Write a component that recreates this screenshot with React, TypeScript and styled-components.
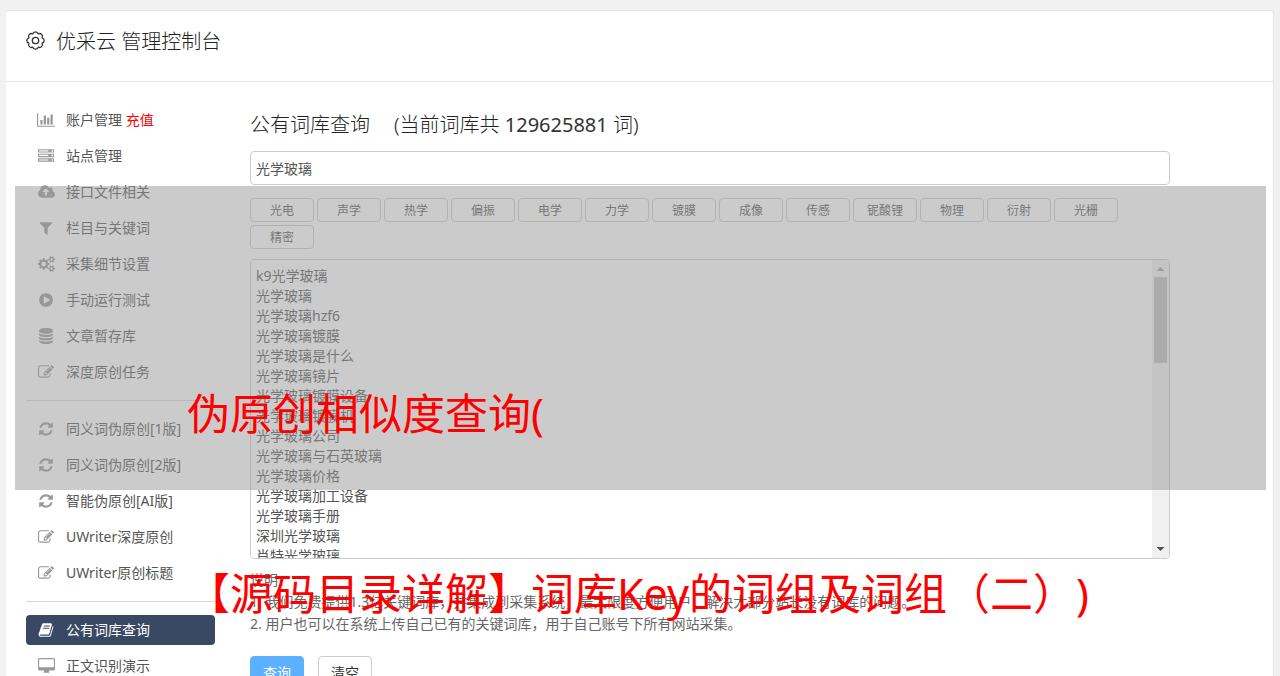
import React from "react";
import styled, { createGlobalStyle } from "styled-components";

const sans = `"Noto Sans", "Noto Sans CJK SC", sans-serif`;

const GlobalStyle = createGlobalStyle`
  *, *::before, *::after { box-sizing: border-box; }
  html, body { height: 100%; overflow: hidden; }
  body { margin: 0; background: #f1f1f1; color: #555; font-family: ${sans}; font-size: 14px; line-height: 20px; text-spacing-trim: space-all; }
  button, input, textarea { font: inherit; color: inherit; }
`;

const Page = styled.div`
  position: relative;
  padding: 10px 6px 0;
`;

const Card = styled.div`
  background: #fff;
  border: 1px solid #e5e5e5;
  border-width: 1px 1px 0 0;
  border-radius: 4px 4px 0 0;
`;

const Header = styled.header`
  display: flex;
  align-items: center;
  gap: 10px;
  height: 71px;
  padding: 0 20px 11px;
  border-bottom: 1px solid #e5e5e5;
`;

const Title = styled.h1`
  margin: 0;
  padding-top: 3px;
  color: #222;
  font-size: 20px;
  line-height: 28px;
  font-weight: 300;
`;

const Columns = styled.div`
  display: flex;
  align-items: flex-start;
  gap: 35px;
  padding: 23px 20px 0;
`;

const Sidebar = styled.nav`
  flex: none;
  width: 189px;
`;

const MenuLink = styled.a<{ $active?: boolean }>`
  display: flex;
  align-items: center;
  gap: 10px;
  height: 30px;
  margin-bottom: 6px;
  padding-left: 10px;
  border-radius: 4px;
  color: ${(p) => (p.$active ? "#fff" : "#555")};
  background: ${(p) => (p.$active ? "#394963" : "transparent")};
  text-decoration: none;
  white-space: nowrap;
`;

const IconBox = styled.span<{ $active?: boolean }>`
  display: flex;
  justify-content: center;
  width: 20px;
  color: ${(p) => (p.$active ? "#fff" : "#999")};
`;

const Recharge = styled.span`
  color: #f00;
`;

const Divider = styled.hr`
  height: 1px;
  margin: 13px 0;
  border: 0;
  background: #d8d8d8;
`;

const Main = styled.main`
  flex: 1;
  max-width: 920px;
  padding-top: 5px;
`;

const Heading = styled.h2`
  display: flex;
  gap: 24px;
  margin: 0 0 11px;
  color: #222;
  font-size: 20px;
  line-height: 30px;
  font-weight: 300;
`;

const Count = styled.span`
  color: #333;
  font-weight: 400;
`;

const SearchBox = styled.input`
  display: block;
  width: 100%;
  height: 34px;
  padding: 0 5px;
  border: 1px solid #ccc;
  border-radius: 4px;
  background: #fff;
`;

const Tags = styled.div`
  display: flex;
  flex-wrap: wrap;
  gap: 3px;
  margin: 13px 0 10px;
`;

const Tag = styled.button`
  width: 64px;
  height: 24px;
  padding: 2px 0 0;
  border: 1px solid #ccc;
  border-radius: 4px;
  background: #fff;
  font-size: 12px;
  line-height: 20px;
`;

const ResultFrame = styled.div`
  display: flex;
  height: 300px;
  border: 1px solid #ccc;
  border-radius: 4px;
  overflow: hidden;
`;

const Results = styled.textarea`
  flex: 1;
  padding: 6px 5px;
  border: 0;
  resize: none;
  overflow: hidden;
  background: #fff;
  line-height: 20px;
`;

const ScrollTrack = styled.div`
  display: flex;
  flex-direction: column;
  align-items: center;
  width: 17px;
  padding: 7px 0;
  background: #f0f0f0;
`;

const ScrollThumb = styled.div`
  width: 13px;
  height: 86px;
  margin: 6px 0 auto;
  background: #c1c1c1;
`;

const Arrow = styled.span<{ $down?: boolean }>`
  width: 8px;
  height: 4px;
  background: ${(p) => (p.$down ? "#505050" : "#a3a3a3")};
  clip-path: ${(p) => (p.$down ? "polygon(0 0, 100% 0, 50% 100%)" : "polygon(0 100%, 100% 100%, 50% 0)")};
`;

const Notes = styled.div`
  margin: 10px 0 21px;
  color: #666;
  line-height: 22px;
`;

const Note = styled.p`
  margin: 0;
`;

const Actions = styled.div`
  display: flex;
  gap: 14px;
`;

const Action = styled.button<{ $primary?: boolean }>`
  width: 54px;
  height: 34px;
  padding: 0;
  border: 1px solid ${(p) => (p.$primary ? "#5bb0ff" : "#ccc")};
  border-radius: 4px;
  color: ${(p) => (p.$primary ? "#fff" : "#333")};
  background: ${(p) => (p.$primary ? "#5bb0ff" : "#fff")};
`;

const Veil = styled.div`
  position: absolute;
  top: 186px;
  left: 15px;
  right: 14px;
  height: 304px;
  background: rgba(151, 151, 151, 0.5);
  pointer-events: none;
`;

const Caption = styled.div`
  position: absolute;
  top: 324px;
  left: 187px;
  color: #f00;
  font-size: 43px;
  line-height: 180px;
  white-space: nowrap;
  pointer-events: none;
`;

const CaptionLine = styled.p`
  margin: 0;
`;

const smallCog = (y: number) =>
  `M1856 ${y}v140q0 16-149 31-12 27-30 52 51 113 51 138 0 4-4 7-122 71-124 71-8 0-46-47t-52-68q-20 2-30 2t-30-2q-14 21-52 68t-46 47q-2 0-124-71-4-3-4-7 0-25 51-138-18-25-30-52-149-15-149-31v-140q0-16 149-31 13-29 30-52-51-113-51-138 0-4 4-7 4-2 35-20t59-34 30-16q8 0 46 46.5t52 67.5q20-2 30-2t30 2q51-71 92-112l6-2q4 0 124 70 4 3 4 7 0 25-51 138 17 23 30 52 149 15 149 31zM1600 ${y + 70}q0-52-38-90t-90-38-90 38-38 90q0 53 37.5 90.5t90.5 37.5 90.5-37.5 37.5-90.5z`;

type Glyph = { x?: number; w?: number; d: string };

const glyphs: Record<string, Glyph> = {
  chart: {
    w: 2048,
    d: "M640 896v512h-256v-512h256zm384-512v1024h-256v-1024h256zm1024 1152v128h-2048v-1536h128v1408h1920zm-640-896v768h-256v-768h256zm384-384v1152h-256v-1152h256z",
  },
  server: {
    d: "M128 1408h1024v-128h-1024v128zm0-512h1024v-128h-1024v128zm1568 448q0-40-28-68t-68-28-68 28-28 68 28 68 68 28 68-28 28-68zm-1568-960h1024v-128h-1024v128zm1568 448q0-40-28-68t-68-28-68 28-28 68 28 68 68 28 68-28 28-68zm0-512q0-40-28-68t-68-28-68 28-28 68 28 68 68 28 68-28 28-68zm96 832v384h-1792v-384h1792zm0-512v384h-1792v-384h1792zm0-512v384h-1792v-384h1792z",
  },
  upload: {
    x: -64,
    w: 1920,
    d: "M1216 864q0-14-9-23l-352-352q-9-9-23-9t-23 9l-351 351q-10 12-10 24 0 14 9 23t23 9h224v352q0 13 9.5 22.5t22.5 9.5h192q13 0 22.5-9.5t9.5-22.5v-352h224q13 0 22.5-9.5t9.5-22.5zm640 288q0 159-112.5 271.5t-271.5 112.5h-1088q-185 0-316.5-131.5t-131.5-316.5q0-130 70-240t188-165q-2-30-2-43 0-212 150-362t362-150q156 0 285.5 87t188.5 231q71-62 166-62 106 0 181 75t75 181q0 76-41 138 130 31 213.5 135.5t83.5 238.5z",
  },
  filter: {
    d: "M1595 295q17 41-14 70l-493 493v742q0 42-39 59-13 5-25 5-27 0-45-19l-256-256q-19-19-19-45v-486l-493-493q-31-29-14-70 17-39 59-39h1280q42 0 59 39z",
  },
  cogs: {
    x: -64,
    w: 1920,
    d:
      "M832 896q0-106-75-181t-181-75-181 75-75 181 75 181 181 75 181-75 75-181zm384-91v185q0 10-7 19.5t-16 10.5l-155 24q-11 35-32 76 34 48 90 115 7 11 7 20 0 12-7 19-23 30-82.5 89.5t-78.5 59.5q-11 0-21-7l-115-90q-37 19-77 31-11 108-23 155-7 24-30 24h-186q-11 0-20-7.5t-10-17.5l-23-153q-34-10-75-31l-118 89q-7 7-20 7-11 0-21-8-144-133-144-160 0-9 7-19 10-14 41-53t47-61q-23-44-35-82l-152-24q-10-1-17-9.5t-7-19.5v-185q0-10 7-19.5t16-10.5l155-24q11-35 32-76-34-48-90-115-7-11-7-20 0-12 7-20 22-30 82-89t79-59q11 0 21 7l115 90q34-18 77-32 11-108 23-154 7-24 30-24h186q11 0 20 7.5t10 17.5l23 153q34 10 75 31l118-89q8-7 20-7 11 0 21 8 144 133 144 160 0 8-7 19-12 16-42 54t-45 60q23 48 34 82l152 23q10 2 17 10.5t7 19.5z" +
      smallCog(1338) +
      smallCog(314),
  },
  play: {
    d: "M896 128q209 0 385.5 103t279.5 279.5 103 385.5-103 385.5-279.5 279.5-385.5 103-385.5-103-279.5-279.5-103-385.5 103-385.5 279.5-279.5 385.5-103zm384 823q32-18 32-55t-32-55l-544-320q-31-19-64-1-32 19-32 56v640q0 37 32 56 16 8 32 8 17 0 32-9z",
  },
  database: {
    d: "M896 768q237 0 443-43t325-127v170q0 69-103 128t-280 93.5-385 34.5-385-34.5-280-93.5-103-128v-170q119 84 325 127t443 43zm0 768q237 0 443-43t325-127v170q0 69-103 128t-280 93.5-385 34.5-385-34.5-280-93.5-103-128v-170q119 84 325 127t443 43zm0-384q237 0 443-43t325-127v170q0 69-103 128t-280 93.5-385 34.5-385-34.5-280-93.5-103-128v-170q119 84 325 127t443 43zm0-1152q208 0 385 34.5t280 93.5 103 128v128q0 69-103 128t-280 93.5-385 34.5-385-34.5-280-93.5-103-128v-128q0-69 103-128t280-93.5 385-34.5z",
  },
  edit: {
    d: "M888 1184l116-116-152-152-116 116v56h96v96h56zm440-720q-16-16-33 1l-350 350q-17 17-1 33t33-1l350-350q17-17 1-33zm80 594v190q0 119-84.5 203.5t-203.5 84.5h-832q-119 0-203.5-84.5t-84.5-203.5v-832q0-119 84.5-203.5t203.5-84.5h832q63 0 117 25 15 7 18 23 3 17-9 29l-49 49q-14 14-32 8-23-6-45-6h-832q-66 0-113 47t-47 113v832q0 66 47 113t113 47h832q66 0 113-47t47-113v-126q0-13 9-22l64-64q15-15 35-7t20 29zm-96-738l288 288-672 672h-288v-288zm444 132l-92 92-288-288 92-92q28-28 68-28t68 28l152 152q28 28 28 68t-28 68z",
  },
  refresh: {
    d: "M1639 1056q0 5-1 7-64 268-268 434.5t-478 166.5q-146 0-282.5-55t-243.5-157l-129 129q-19 19-45 19t-45-19-19-45v-448q0-26 19-45t45-19h448q26 0 45 19t19 45-19 45l-137 137q71 66 161 102t187 36q134 0 250-65t186-179q11-17 53-117 8-23 30-23h192q13 0 22.5 9.5t9.5 22.5zm25-800v448q0 26-19 45t-45 19h-448q-26 0-45-19t-19-45 19-45l138-138q-148-137-349-137-134 0-250 65t-186 179q-11 17-53 117-8 23-30 23h-199q-13 0-22.5-9.5t-9.5-22.5v-7q65-268 270-434.5t480-166.5q146 0 284 55.5t245 156.5l130-129q19-19 45-19t45 19 19 45z",
  },
  book: {
    d: "M1703 478q40 57 18 129l-275 906q-19 64-76.5 107.5t-122.5 43.5h-923q-77 0-148.5-53.5t-99.5-131.5q-24-67-2-127 0-4 3-27t4-37q1-8-3-21.5t-3-19.5q2-11 8-21t16.5-23.5 16.5-23.5q23-38 45-91.5t30-91.5q3-10 .5-30t-.5-28q3-11 17-28t17-23q21-36 42-92t25-90q1-9-2.5-32t.5-28q4-13 22-30.5t22-22.5q19-26 42.5-84.5t27.5-96.5q1-8-3-25.5t-2-26.5q2-8 9-18t18-23 17-21q8-12 16.5-30.5t15-35 16-36 19.5-32 26.5-23.5 36-11.5 47.5 5.5l-1 3q38-9 51-9h761q74 0 114 56t18 130l-274 906q-36 119-71.5 153.5t-128.5 34.5h-869q-27 0-38 15-11 16-1 43 24 70 144 70h923q29 0 56-15.5t35-41.5l300-987q7-22 5-57 38 15 59 43zm-1064 2q-4 13 2 22.5t20 9.5h608q13 0 25.5-9.5t16.5-22.5l21-64q4-13-2-22.5t-20-9.5h-608q-13 0-25.5 9.5t-16.5 22.5zm-83 256q-4 13 2 22.5t20 9.5h608q13 0 25.5-9.5t16.5-22.5l21-64q4-13-2-22.5t-20-9.5h-608q-13 0-25.5 9.5t-16.5 22.5z",
  },
  desktop: {
    x: -64,
    w: 1920,
    d: "M1728 992v-832q0-13-9.5-22.5t-22.5-9.5h-1600q-13 0-22.5 9.5t-9.5 22.5v832q0 13 9.5 22.5t22.5 9.5h1600q13 0 22.5-9.5t9.5-22.5zm128-832v1088q0 66-47 113t-113 47h-544q0 37 16 77.5t32 71 16 43.5q0 26-19 45t-45 19h-512q-26 0-45-19t-19-45q0-14 16-44t32-70 16-78h-544q-66 0-113-47t-47-113v-1088q0-66 47-113t113-47h1600q66 0 113 47t47 113z",
  },
};

const Icon = ({ name }: { name: string }) => {
  const { x = 0, w = 1792, d } = glyphs[name];
  return (
    <svg width={Math.round((w * 16) / 1792)} height="16" viewBox={`${x} 0 ${w} 1792`} fill="currentColor" aria-hidden="true">
      <path fillRule="evenodd" d={d} />
    </svg>
  );
};

const scallops = Array.from({ length: 8 }, (_, i) => {
  const a = ((i + 0.5) * Math.PI) / 4;
  return `${(9.5 + 7.1 * Math.cos(a)).toFixed(2)} ${(9.5 + 7.1 * Math.sin(a)).toFixed(2)}`;
});

const GearIcon = () => (
  <svg width="20" height="20" viewBox="0 0 20 20" fill="none" stroke="#333" strokeWidth="1.3" strokeLinejoin="round" aria-hidden="true">
    <path d={`M${scallops[7]}` + scallops.map((p) => `A2.8 2.8 0 0 1 ${p}`).join("") + "Z"} />
    <circle cx="9.5" cy="9.5" r="3.2" />
  </svg>
);

type Item = { icon: string; text: string; extra?: string; active?: boolean };

const groups: Item[][] = [
  [
    { icon: "chart", text: "账户管理", extra: "充值" },
    { icon: "server", text: "站点管理" },
    { icon: "upload", text: "接口文件相关" },
    { icon: "filter", text: "栏目与关键词" },
    { icon: "cogs", text: "采集细节设置" },
    { icon: "play", text: "手动运行测试" },
    { icon: "database", text: "文章暂存库" },
    { icon: "edit", text: "深度原创任务" },
  ],
  [
    { icon: "refresh", text: "同义词伪原创[1版]" },
    { icon: "refresh", text: "同义词伪原创[2版]" },
    { icon: "refresh", text: "智能伪原创[AI版]" },
    { icon: "edit", text: "UWriter深度原创" },
    { icon: "edit", text: "UWriter原创标题" },
  ],
  [
    { icon: "book", text: "公有词库查询", active: true },
    { icon: "desktop", text: "正文识别演示" },
  ],
];

const tags = ["光电", "声学", "热学", "偏振", "电学", "力学", "镀膜", "成像", "传感", "铌酸锂", "物理", "衍射", "光栅", "精密"];

const words = [
  "k9光学玻璃",
  "光学玻璃",
  "光学玻璃hzf6",
  "光学玻璃镀膜",
  "光学玻璃是什么",
  "光学玻璃镜片",
  "光学玻璃镀膜设备",
  "光学玻璃镀膜机",
  "光学玻璃公司",
  "光学玻璃与石英玻璃",
  "光学玻璃价格",
  "光学玻璃加工设备",
  "光学玻璃手册",
  "深圳光学玻璃",
  "肖特光学玻璃",
];

export default function App() {
  return (
    <Page lang="zh-CN">
      <GlobalStyle />
      <Card>
        <Header>
          <GearIcon />
          <Title>优采云 管理控制台</Title>
        </Header>
        <Columns>
          <Sidebar>
            {groups.map((group, g) => (
              <React.Fragment key={g}>
                {g > 0 && <Divider />}
                {group.map((item) => (
                  <MenuLink key={item.text} href="#" $active={item.active}>
                    <IconBox $active={item.active}>
                      <Icon name={item.icon} />
                    </IconBox>
                    <span>
                      {item.text} {item.extra && <Recharge>{item.extra}</Recharge>}
                    </span>
                  </MenuLink>
                ))}
              </React.Fragment>
            ))}
          </Sidebar>
          <Main>
            <Heading>
              <span>公有词库查询</span>
              <span>
                (当前词库共 <Count>129625881</Count> 词)
              </span>
            </Heading>
            <SearchBox aria-label="关键词" defaultValue="光学玻璃" />
            <Tags>
              {tags.map((tag) => (
                <Tag key={tag} type="button">
                  {tag}
                </Tag>
              ))}
            </Tags>
            <ResultFrame>
              <Results aria-label="查询结果" readOnly defaultValue={words.join("\n")} />
              <ScrollTrack>
                <Arrow />
                <ScrollThumb />
                <Arrow $down />
              </ScrollTrack>
            </ResultFrame>
            <Notes>
              <Note>说明：</Note>
              <Note>1. 我们免费提供1.3亿关键词库，并集成到采集系统，最大限度方便用户，解决大部分站长没有词库的问题。</Note>
              <Note>2. 用户也可以在系统上传自己已有的关键词库，用于自己账号下所有网站采集。</Note>
            </Notes>
            <Actions>
              <Action type="button" $primary>
                查询
              </Action>
              <Action type="button">清空</Action>
            </Actions>
          </Main>
        </Columns>
      </Card>
      <Veil />
      <Caption>
        <CaptionLine>伪原创相似度查询(</CaptionLine>
        <CaptionLine>【源码目录详解】词库Key的词组及词组（二）)</CaptionLine>
      </Caption>
    </Page>
  );
}
